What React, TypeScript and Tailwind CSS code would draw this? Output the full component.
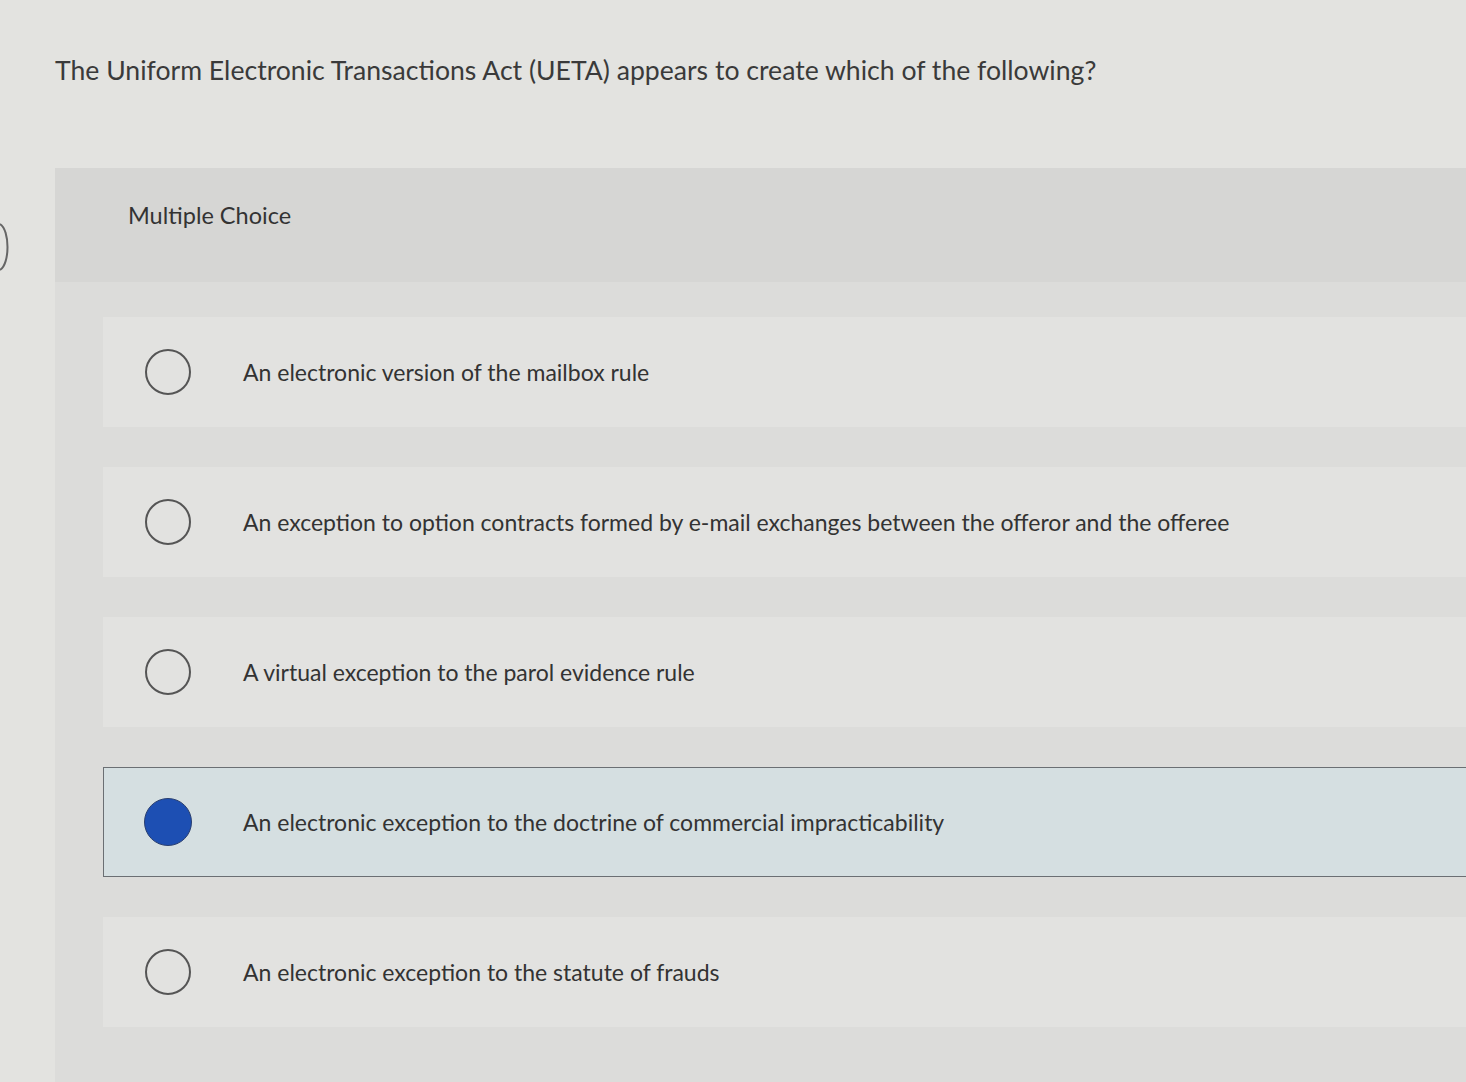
import React from "react";

const options = [
  "An electronic version of the mailbox rule",
  "An exception to option contracts formed by e-mail exchanges between the offeror and the offeree",
  "A virtual exception to the parol evidence rule",
  "An electronic exception to the doctrine of commercial impracticability",
  "An electronic exception to the statute of frauds",
];

export default function App() {
  return (
    <div
      className="relative w-full h-[1082px] overflow-hidden bg-[#e3e3e0] text-[#333333]"
      style={{ fontFamily: "Lato, 'Open Sans', sans-serif" }}
    >
      <svg className="absolute left-0 top-[222px]" width="12" height="50" viewBox="0 0 12 50">
        <path d="M0 2 C10 8 10 42 0 48" fill="none" stroke="#666" strokeWidth="2" />
      </svg>
      <h1 className="pl-[55px] pt-[54px] text-[26.6px] leading-[32px] font-normal text-[#3a3a3a]">
        The Uniform Electronic Transactions Act (UETA) appears to create which of the following?
      </h1>
      <div className="ml-[55px] mt-[82px] bg-[#dcdcda] h-[1000px]">
        <div className="h-[114px] bg-[#d6d6d4] pl-[73px] pt-[30px]">
          <span className="text-[23.5px] text-[#333]">Multiple Choice</span>
        </div>
        <div className="pl-[48px] pt-[35px] flex flex-col gap-[40px]">
          {options.map((o, i) => {
            const sel = i === 3;
            return (
              <div
                key={i}
                className={
                  sel
                    ? "h-[110px] flex items-center bg-[#d5dfe1] border border-r-0 border-[#6b6f73]"
                    : "h-[110px] flex items-center bg-[#e2e2e0]"
                }
              >
                {sel ? (
                  <div className="ml-[40px] w-[48px] h-[48px] rounded-full bg-[#1d4fb3] border border-[#2a3f70]" />
                ) : (
                  <div className="ml-[42px] w-[46px] h-[46px] rounded-full border-2 border-[#555]" />
                )}
                <span className={(sel ? "ml-[51px]" : "ml-[52px]") + " text-[23px] text-[#333]"}>{o}</span>
              </div>
            );
          })}
        </div>
      </div>
    </div>
  );
}
